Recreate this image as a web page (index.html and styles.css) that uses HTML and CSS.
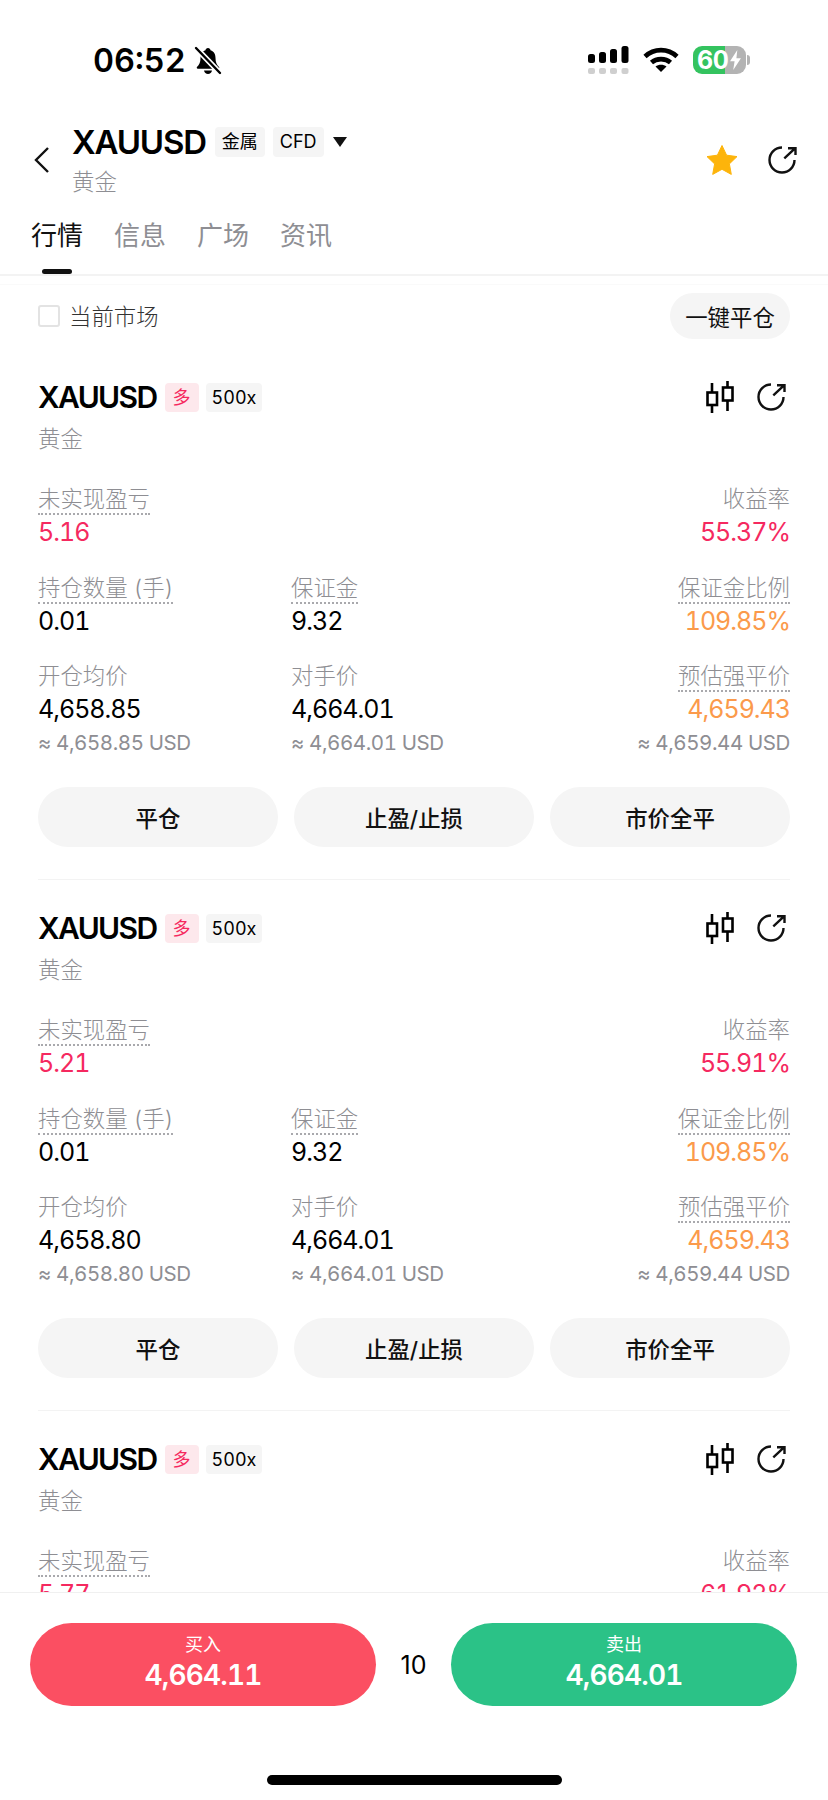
FILE: index.html
```html
<!DOCTYPE html>
<html lang="zh-CN">
<head>
  <meta charset="UTF-8" />
  <meta name="viewport" content="width=device-width, initial-scale=1" />
  <title>XAUUSD 黄金</title>
  <link rel="stylesheet" href="styles.css">
</head>
<body>

  <div class="status-bar">
    <div class="status-left">
      <span class="time">06:52</span>
      <svg class="bell" viewBox="0 0 28 30">
        <path d="M14 2c-1.500 0-2.300 1-2.500 2.200C7.800 5.300 6.500 8.500 6.500 12c0 4.500-1.200 6.500-3.500 9-.6.700-.2 1.700.8 1.700h20.400c1 0 1.400-1 .8-1.700-2.300-2.500-3.500-4.500-3.500-9 0-3.500-1.300-6.700-5-7.800C16.300 3 15.500 2 14 2z" fill="#000"/>
        <path d="M10 24.500h8c-.3 2.200-2 3.500-4 3.500s-3.700-1.300-4-3.500z" fill="#000"/>
        <path d="M3 3l23 24" stroke="#fff" stroke-width="5.500"/>
        <path d="M2 2l24 25" stroke="#000" stroke-width="2.400" stroke-linecap="round"/>
      </svg>
    </div>
    <div class="status-right">
      <svg class="signal" viewBox="0 0 42 29">
        <rect x="0" y="8" width="7" height="9" rx="2.500"/>
        <rect x="11" y="6" width="7" height="11" rx="2.500"/>
        <rect x="22" y="3" width="7" height="14" rx="2.500"/>
        <rect x="33.500" y="0" width="7" height="17" rx="2.500"/>
        <g fill="#cfcfcf">
          <rect x="0" y="22" width="7" height="6" rx="2"/>
          <rect x="11" y="22" width="7" height="6" rx="2"/>
          <rect x="22" y="22" width="7" height="6" rx="2"/>
          <rect x="33.500" y="22" width="7" height="6" rx="2"/>
        </g>
      </svg>
      <svg class="wifi" viewBox="0 0 36 26">
        <path d="M2 10.500C11 2 25 2 34 10.500" fill="none" stroke="#000" stroke-width="4.600"/>
        <path d="M8.500 16.500C13.500 12 22.500 12 27.500 16.500" fill="none" stroke="#000" stroke-width="4.600"/>
        <path d="M12.500 20.500C15.500 18 20.500 18 23.500 20.500L18 26z" fill="#000"/>
      </svg>
      <div class="battery">
        <span class="battery-num">60</span>
        <svg class="bolt" viewBox="0 0 14 22"><path d="M9 0L1 12.500h5L4.500 22 13 9H8z" fill="#fff"/></svg>
      </div>
      <span class="battery-nub"></span>
    </div>
  </div>

  <div class="nav">
    <svg class="back" viewBox="0 0 16 28"><path d="M14 2L2 14l12 12" fill="none" stroke="#111" stroke-width="2.400"/></svg>
    <div class="nav-title">
      <div class="nav-line">
        <span class="symbol">XAUUSD</span>
        <span class="nav-tag">金属</span>
        <span class="nav-tag">CFD</span>
        <span class="caret"></span>
      </div>
      <div class="nav-sub">黄金</div>
    </div>
    <div class="nav-icons">
      <svg class="star" viewBox="0 0 32 30"><path d="M16 .5l4.600 9.700 10.400 1.400-7.600 7.300 1.900 10.500L16 24.300 6.700 29.400l1.900-10.500L1 11.600l10.400-1.400z" fill="#fdb40b" stroke="#fdb40b" stroke-linejoin="round"/></svg>
      <svg class="share" viewBox="0 0 30 28"><path d="M14 1.500A12.500 12.500 0 1 0 26.500 14" fill="none" stroke="#111" stroke-width="2.400"/><path d="M16.300 12.300L27 2.300M20 2.300h7.500V9" fill="none" stroke="#111" stroke-width="2.400"/></svg>
    </div>
  </div>

  <div class="tabs">
    <div class="tab active">行情</div>
    <div class="tab">信息</div>
    <div class="tab">广场</div>
    <div class="tab">资讯</div>
  </div>

  <div class="filter">
    <label class="filter-check"><span class="checkbox"></span><span class="filter-text">当前市场</span></label>
    <button class="close-all">一键平仓</button>
  </div>

  <div class="list">

    <div class="card">
      <div class="card-head">
        <div class="card-title">
          <span class="card-symbol">XAUUSD</span>
          <span class="tag tag-long">多</span>
          <span class="tag">500x</span>
        </div>
        <div class="card-icons">
          <svg class="candle" viewBox="0 0 30 32"><path d="M7 2v30M22.500 0v30" stroke="#000" stroke-width="2.600"/><rect x="2.500" y="11.500" width="9.500" height="12.500" fill="#fff" stroke="#000" stroke-width="2.600"/><rect x="18" y="6.500" width="9.500" height="13" fill="#fff" stroke="#000" stroke-width="2.600"/></svg>
          <svg class="share" viewBox="0 0 30 28"><path d="M14 1.500A12.500 12.500 0 1 0 26.500 14" fill="none" stroke="#111" stroke-width="2.400"/><path d="M16.300 12.300L27 2.300M20 2.300h7.500V9" fill="none" stroke="#111" stroke-width="2.400"/></svg>
        </div>
      </div>
      <div class="card-sub">黄金</div>
      <div class="stats">
        <div class="stat"><span class="label dotted">未实现盈亏</span><div class="value red">5.16</div></div>
        <div class="stat"></div>
        <div class="stat right"><span class="label">收益率</span><div class="value red">55.37%</div></div>
        <div class="stat"><span class="label dotted">持仓数量 (手)</span><div class="value">0.01</div></div>
        <div class="stat"><span class="label dotted">保证金</span><div class="value">9.32</div></div>
        <div class="stat right"><span class="label dotted">保证金比例</span><div class="value orange">109.85%</div></div>
        <div class="stat"><span class="label">开仓均价</span><div class="value">4,658.85</div><div class="approx">≈ 4,658.85 USD</div></div>
        <div class="stat"><span class="label">对手价</span><div class="value">4,664.01</div><div class="approx">≈ 4,664.01 USD</div></div>
        <div class="stat right"><span class="label dotted">预估强平价</span><div class="value orange">4,659.43</div><div class="approx">≈ 4,659.44 USD</div></div>
      </div>
      <div class="actions">
        <button class="action">平仓</button>
        <button class="action">止盈/止损</button>
        <button class="action">市价全平</button>
      </div>
    </div>

    <div class="card">
      <div class="card-head">
        <div class="card-title">
          <span class="card-symbol">XAUUSD</span>
          <span class="tag tag-long">多</span>
          <span class="tag">500x</span>
        </div>
        <div class="card-icons">
          <svg class="candle" viewBox="0 0 30 32"><path d="M7 2v30M22.500 0v30" stroke="#000" stroke-width="2.600"/><rect x="2.500" y="11.500" width="9.500" height="12.500" fill="#fff" stroke="#000" stroke-width="2.600"/><rect x="18" y="6.500" width="9.500" height="13" fill="#fff" stroke="#000" stroke-width="2.600"/></svg>
          <svg class="share" viewBox="0 0 30 28"><path d="M14 1.500A12.500 12.500 0 1 0 26.500 14" fill="none" stroke="#111" stroke-width="2.400"/><path d="M16.300 12.300L27 2.300M20 2.300h7.500V9" fill="none" stroke="#111" stroke-width="2.400"/></svg>
        </div>
      </div>
      <div class="card-sub">黄金</div>
      <div class="stats">
        <div class="stat"><span class="label dotted">未实现盈亏</span><div class="value red">5.21</div></div>
        <div class="stat"></div>
        <div class="stat right"><span class="label">收益率</span><div class="value red">55.91%</div></div>
        <div class="stat"><span class="label dotted">持仓数量 (手)</span><div class="value">0.01</div></div>
        <div class="stat"><span class="label dotted">保证金</span><div class="value">9.32</div></div>
        <div class="stat right"><span class="label dotted">保证金比例</span><div class="value orange">109.85%</div></div>
        <div class="stat"><span class="label">开仓均价</span><div class="value">4,658.80</div><div class="approx">≈ 4,658.80 USD</div></div>
        <div class="stat"><span class="label">对手价</span><div class="value">4,664.01</div><div class="approx">≈ 4,664.01 USD</div></div>
        <div class="stat right"><span class="label dotted">预估强平价</span><div class="value orange">4,659.43</div><div class="approx">≈ 4,659.44 USD</div></div>
      </div>
      <div class="actions">
        <button class="action">平仓</button>
        <button class="action">止盈/止损</button>
        <button class="action">市价全平</button>
      </div>
    </div>

    <div class="card">
      <div class="card-head">
        <div class="card-title">
          <span class="card-symbol">XAUUSD</span>
          <span class="tag tag-long">多</span>
          <span class="tag">500x</span>
        </div>
        <div class="card-icons">
          <svg class="candle" viewBox="0 0 30 32"><path d="M7 2v30M22.500 0v30" stroke="#000" stroke-width="2.600"/><rect x="2.500" y="11.500" width="9.500" height="12.500" fill="#fff" stroke="#000" stroke-width="2.600"/><rect x="18" y="6.500" width="9.500" height="13" fill="#fff" stroke="#000" stroke-width="2.600"/></svg>
          <svg class="share" viewBox="0 0 30 28"><path d="M14 1.500A12.500 12.500 0 1 0 26.500 14" fill="none" stroke="#111" stroke-width="2.400"/><path d="M16.300 12.300L27 2.300M20 2.300h7.500V9" fill="none" stroke="#111" stroke-width="2.400"/></svg>
        </div>
      </div>
      <div class="card-sub">黄金</div>
      <div class="stats">
        <div class="stat"><span class="label dotted">未实现盈亏</span><div class="value red">5.77</div></div>
        <div class="stat"></div>
        <div class="stat right"><span class="label">收益率</span><div class="value red">61.92%</div></div>
      </div>
    </div>

  </div>

  <div class="footer">
    <div class="trade">
      <button class="trade-btn buy"><span class="trade-label">买入</span><span class="trade-price">4,664.11</span></button>
      <span class="lots">10</span>
      <button class="trade-btn sell"><span class="trade-label">卖出</span><span class="trade-price">4,664.01</span></button>
    </div>
    <div class="home-bar"></div>
  </div>

</body>
</html>
```

FILE: styles.css
```css
* {
  box-sizing: border-box;
}

html, body {
  margin: 0;
  padding: 0;
  height: 100%;
}

body {
  display: flex;
  flex-direction: column;
  height: 1800px;
  overflow: hidden;
  background: #fff;
  color: #000;
  font-family: Inter, "Noto Sans CJK SC", sans-serif;
  font-variant-numeric: tabular-nums;
}

button {
  font-family: inherit;
  font-variant-numeric: inherit;
  border: none;
  padding: 0;
}

/* status bar */
.status-bar {
  display: flex;
  justify-content: space-between;
  flex: none;
  height: 122px;
  padding: 46px 78px 0 93px;
}

.status-left {
  display: flex;
  align-items: flex-start;
  gap: 8px;
}

.time {
  font-size: 32.5px;
  font-weight: 600;
  line-height: 30px;
}

.bell {
  width: 28px;
  height: 30px;
}

.status-right {
  display: flex;
  align-items: flex-start;
}

.signal {
  width: 42px;
  height: 29px;
  margin-right: 13px;
}

.wifi {
  width: 36px;
  height: 26px;
  margin-right: 14px;
}

.battery {
  display: flex;
  align-items: center;
  width: 53px;
  height: 28px;
  padding-left: 4px;
  border-radius: 9px;
  background: linear-gradient(90deg, #34c35f 60%, #b3b3b3 60%);
}

.battery-num {
  color: #fff;
  font-size: 25px;
  font-weight: 700;
  line-height: 28px;
  letter-spacing: -.5px;
}

.bolt {
  width: 13px;
  height: 20px;
  margin-left: 1px;
}

.battery-nub {
  width: 3px;
  height: 10px;
  margin: 9px 0 0 1px;
  border-radius: 0 3px 3px 0;
  background: #b3b3b3;
}

/* nav */
.nav {
  display: flex;
  align-items: center;
  flex: none;
  padding: 0 30px 0 34px;
}

.back {
  flex: none;
  width: 16px;
  height: 28px;
  margin-right: 22px;
}

.nav-title {
  flex: 1;
}

.nav-line {
  display: flex;
  align-items: center;
  height: 40px;
}

.symbol {
  font-size: 33px;
  font-weight: 600;
  letter-spacing: -1.2px;
  margin-right: 9px;
}

.nav-tag {
  height: 30px;
  padding: 0 7px;
  margin-right: 8px;
  border-radius: 4px;
  background: #f5f5f5;
  font-size: 18px;
  line-height: 30px;
}

.caret {
  width: 0;
  height: 0;
  margin-left: 1px;
  border-left: 7px solid transparent;
  border-right: 7px solid transparent;
  border-top: 10px solid #111;
}

.nav-sub {
  margin-top: 5px;
  color: #8e8e93;
  font-size: 22.4px;
  font-weight: 300;
  line-height: 30px;
}

.nav-icons {
  display: flex;
  align-items: center;
  gap: 30px;
}

.star {
  width: 32px;
  height: 30px;
}

.share {
  width: 30px;
  height: 28px;
}

/* tabs */
.tabs {
  display: flex;
  flex: none;
  gap: 31px;
  padding: 21px 0 0 31px;
  border-bottom: 2px solid #f3f3f3;
}

.tab {
  position: relative;
  padding-bottom: 20px;
  color: #8e8e93;
  font-size: 26px;
  line-height: 36px;
}

.tab.active {
  color: #111;
}

.tab.active::after {
  content: "";
  position: absolute;
  left: 11px;
  bottom: 0;
  width: 30px;
  height: 5px;
  border-radius: 3px;
  background: #111;
}

/* filter */
.filter {
  display: flex;
  justify-content: space-between;
  align-items: center;
  flex: none;
  margin-top: 8px;
  padding: 8px 38px 0;
  border-top: 1px solid #fafafa;
}

.filter-check {
  display: flex;
  align-items: center;
  gap: 9px;
  color: #333;
  font-size: 22.4px;
  font-weight: 300;
}

.filter-text {
  padding-bottom: 2px;
}

.checkbox {
  width: 22px;
  height: 22px;
  border: 2px solid #e3e3e3;
  border-radius: 3px;
}

.close-all {
  width: 120px;
  height: 46px;
  border-radius: 23px;
  background: #f5f5f5;
  color: #111;
  font-size: 22.4px;
}

/* position cards */
.list {
  flex: 1;
  min-height: 0;
  overflow: hidden;
  padding: 0 38px;
  margin-top: 10px;
}

.card {
  padding: 30px 0 32px;
  border-bottom: 1px solid #f3f3f3;
}

.card-head {
  display: flex;
  justify-content: space-between;
  align-items: center;
}

.card-title {
  display: flex;
  align-items: center;
  height: 36px;
}

.card-symbol {
  font-size: 30px;
  font-weight: 600;
  letter-spacing: -1.6px;
  margin-right: 8px;
}

.tag {
  height: 29px;
  padding: 0 6px;
  margin-right: 7px;
  border-radius: 4px;
  background: #f5f5f5;
  font-size: 18px;
  line-height: 29px;
}

.tag-long {
  width: 34px;
  padding: 0;
  background: #fde8ec;
  color: #f5295f;
  text-align: center;
}

.card-icons {
  display: flex;
  align-items: center;
  gap: 22px;
  margin-right: 3px;
}

.candle {
  width: 30px;
  height: 32px;
}

.card-sub {
  margin-top: 9px;
  color: #8e8e93;
  font-size: 22.4px;
  font-weight: 300;
  line-height: 30px;
}

.stats {
  display: grid;
  grid-template-columns: 253px 1fr auto;
  row-gap: 26.5px;
  margin-top: 31px;
}

.stat.right {
  text-align: right;
}

.label {
  display: inline-block;
  color: #8e8e93;
  font-size: 22.4px;
  font-weight: 300;
  line-height: 28px;
  border-bottom: 2px solid transparent;
}

.label.dotted {
  border-bottom: 2px dotted #a9a9ad;
}

.value {
  margin-top: 2px;
  font-size: 25px;
  font-weight: 425;
  letter-spacing: -1px;
  line-height: 30px;
}

.value.red {
  color: #f5295f;
}

.value.orange {
  color: #fb9a4b;
}

.approx {
  margin-top: 5px;
  color: #8e8e93;
  font-size: 20.5px;
  letter-spacing: -.4px;
  line-height: 28px;
}

.actions {
  display: flex;
  gap: 16px;
  margin-top: 30px;
}

.action {
  flex: 1;
  height: 60px;
  border-radius: 30px;
  background: #f5f5f5;
  color: #111;
  font-size: 22.4px;
  font-weight: 500;
}

/* footer */
.footer {
  flex: none;
  padding: 30px 30px 15px;
  border-top: 1px solid #f0f0f0;
  background: #fff;
}

.trade {
  display: flex;
  justify-content: space-between;
  align-items: center;
  margin-right: 1px;
}

.trade-btn {
  display: flex;
  flex-direction: column;
  align-items: center;
  width: 346px;
  height: 83px;
  padding-top: 10px;
  border-radius: 42px;
  color: #fff;
}

.buy {
  background: #fb4f62;
}

.sell {
  background: #2bc287;
}

.trade-label {
  font-size: 18px;
  line-height: 24px;
}

.trade-price {
  font-size: 28px;
  font-weight: 600;
  letter-spacing: -.85px;
  line-height: 36px;
}

.lots {
  font-size: 25px;
  font-variant-numeric: normal;
}

.home-bar {
  width: 295px;
  height: 10px;
  margin: 69px auto 0;
  border-radius: 5px;
  background: #000;
}
```
